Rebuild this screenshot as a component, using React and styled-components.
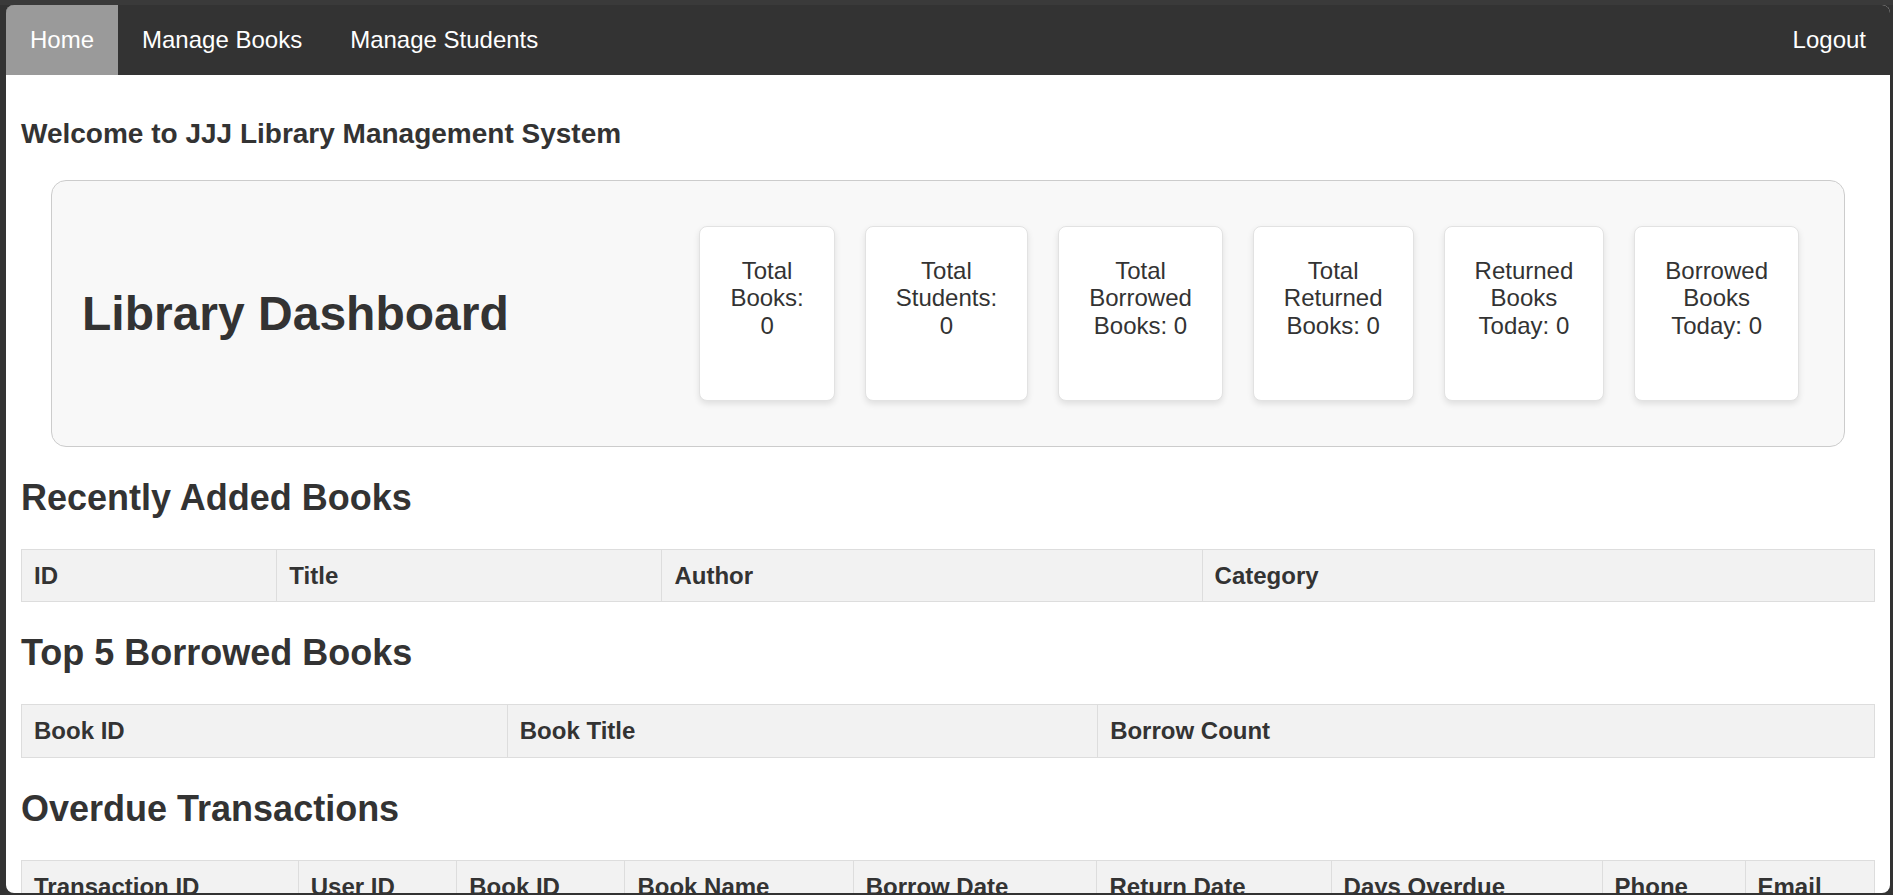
import React from 'react';
import styled, { createGlobalStyle } from 'styled-components';

const GlobalStyle = createGlobalStyle`
  html, body {
    margin: 0;
    padding: 0;
    background: #333;
    height: 100%;
    overflow: hidden;
  }
  body {
    font-family: "Liberation Sans", Arial, sans-serif;
    font-size: 24px;
    color: #333;
  }
`;

const Frame = styled.div`
  height: 100vh;
  box-sizing: border-box;
  padding: 5px 3px 2px 6px;
  background: linear-gradient(#3a3a3a 0, #3a3a3a 5px, #333 5px);
`;

const Window = styled.div`
  height: 100%;
  background: #fff;
  border-radius: 8px;
  overflow: hidden;
`;

const NavBar = styled.nav`
  display: flex;
  align-items: center;
  background: #333;
`;

const NavLink = styled.a`
  display: block;
  padding: 21px 24px;
  color: #fff;
  text-decoration: none;
  font-size: 24px;
  line-height: 27.6px;
  background: ${(props) => (props.active ? '#9a9a9a' : 'transparent')};
  margin-left: ${(props) => (props.right ? 'auto' : '0')};
  cursor: pointer;
`;

const Content = styled.main`
  padding: 15px;
`;

const Welcome = styled.h3`
  font-size: 28px;
  margin: 28px 0;
`;

const DashboardBox = styled.section`
  display: flex;
  justify-content: space-between;
  align-items: center;
  margin: 30px;
  padding: 30px;
  background: #f8f8f8;
  border: 1px solid #ccc;
  border-radius: 15px;
`;

const DashTitle = styled.h1`
  font-size: 48px;
  margin: 0;
`;

const Stats = styled.div`
  display: flex;
`;

const StatCard = styled.div`
  width: min-content;
  min-height: 113px;
  margin: 15px;
  padding: 30px;
  background: #fff;
  border: 1px solid #e2e2e2;
  border-radius: 8px;
  box-shadow: 0 3px 6px rgba(0, 0, 0, 0.1);
  text-align: center;
  line-height: 27.6px;
`;

const SectionTitle = styled.h2`
  font-size: 36px;
  margin: 30px 0;
`;

const Table = styled.table`
  width: 100%;
  border-collapse: collapse;
`;

const Th = styled.th`
  padding: 12px;
  text-align: left;
  font-weight: bold;
  background: #f2f2f2;
  border: 1px solid #ddd;
  line-height: 27.6px;
`;

const stats = [
  'Total Books: 0',
  'Total Students: 0',
  'Total Borrowed Books: 0',
  'Total Returned Books: 0',
  'Returned Books Today: 0',
  'Borrowed Books Today: 0',
];

const sections = [
  { title: 'Recently Added Books', cols: ['ID', 'Title', 'Author', 'Category'] },
  { title: 'Top 5 Borrowed Books', cols: ['Book ID', 'Book Title', 'Borrow Count'] },
  {
    title: 'Overdue Transactions',
    cols: ['Transaction ID', 'User ID', 'Book ID', 'Book Name', 'Borrow Date', 'Return Date', 'Days Overdue', 'Phone', 'Email'],
  },
];

const App = () => {
  return (
    <>
      <GlobalStyle />
      <Frame>
        <Window>
          <NavBar>
            <NavLink active>Home</NavLink>
            <NavLink>Manage Books</NavLink>
            <NavLink>Manage Students</NavLink>
            <NavLink right>Logout</NavLink>
          </NavBar>
          <Content>
            <Welcome>Welcome to JJJ Library Management System</Welcome>
            <DashboardBox>
              <DashTitle>Library Dashboard</DashTitle>
              <Stats>
                {stats.map((s) => (
                  <StatCard key={s}>{s}</StatCard>
                ))}
              </Stats>
            </DashboardBox>
            {sections.map((sec) => (
              <div key={sec.title}>
                <SectionTitle>{sec.title}</SectionTitle>
                <Table>
                  <thead>
                    <tr>
                      {sec.cols.map((c) => (
                        <Th key={c}>{c}</Th>
                      ))}
                    </tr>
                  </thead>
                  <tbody />
                </Table>
              </div>
            ))}
          </Content>
        </Window>
      </Frame>
    </>
  );
};

export default App;
